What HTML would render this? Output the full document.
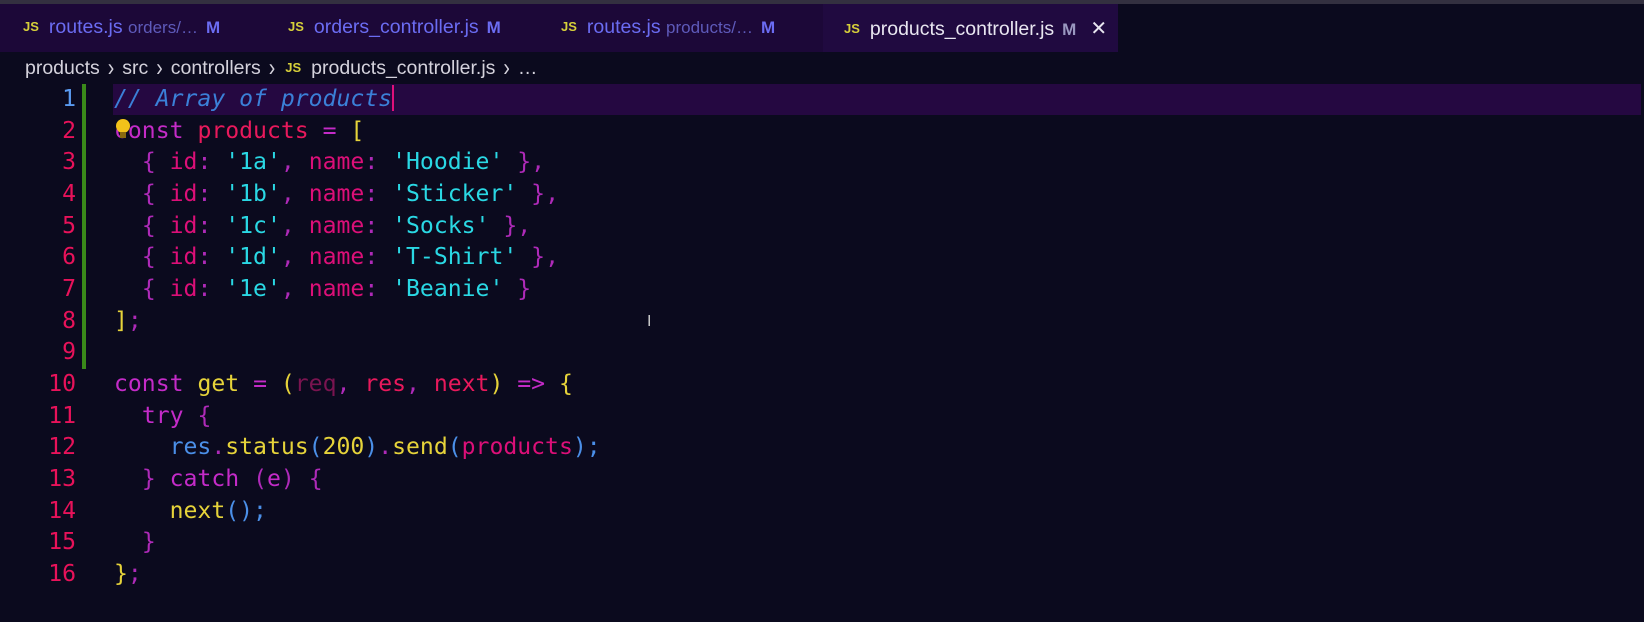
<!DOCTYPE html>
<html><head><meta charset="utf-8"><style>
*{margin:0;padding:0;box-sizing:border-box}
body{width:1644px;height:594px;background:#0b0a1e;overflow:hidden;position:relative;font-family:"Liberation Sans","DejaVu Sans",sans-serif}
.top{position:absolute;left:0;top:0;width:1644px;height:4px;background:#333040}
.tabs{position:absolute;left:0;top:4px;width:1118px;height:48px;background:#1c0838}
.active{position:absolute;left:823px;top:4px;width:295px;height:48px;background:#200a40}
.tab{position:absolute;top:16px;font-size:19.5px;color:#6b6cf2;white-space:nowrap}
.tab .js{color:#d6cf3a;font-weight:bold;font-size:13px;margin-right:10px;vertical-align:2px}
.tab .d{color:#5e5aba;font-size:17px}
.tab .m{font-weight:bold;font-size:17px;margin-left:8px}
.bc{position:absolute;top:57px;left:25px;font-size:19.5px;color:#d4d2dc;white-space:nowrap}
.bc .js{color:#d6cf3a;font-weight:bold;font-size:13px;vertical-align:2px;margin:0 10px 0 2px}
.ch{display:inline-block;margin:0 8px;transform:scaleY(1.3)}
.hl{position:absolute;left:113px;top:84px;width:1528px;height:31px;background:#250841}
.gut{position:absolute;left:82px;top:84px;width:4px;height:285px;background:#3a8a1a}
.code{position:absolute;left:0;top:84px;font-family:"DejaVu Sans Mono",monospace;font-size:23.1px;line-height:31.66px;white-space:pre}
.ln{position:absolute;left:0;width:76px;text-align:right;color:#e8125a}
.c{position:absolute;left:114px;color:#c42bc8}
.cm{color:#3b80d8;font-style:italic}.k{color:#c42bc8}.v{color:#e8195c}.y{color:#e6d33a}.p{color:#ae2ab8}.i{color:#dc0f78}.s{color:#2ad8e4}.b{color:#4b8fe8}.f{color:#e6d33a}.dim{color:#7a1450}
.cur{display:inline-block;width:2px;height:26px;background:#e0107a;vertical-align:-5px}
</style></head><body>
<div class="top"></div><div class="tabs"></div><div class="active"></div>
<div class="tab" style="left:23px"><span class="js">JS</span>routes.js <span class="d">orders/…</span><span class="m">M</span></div>
<div class="tab" style="left:288px"><span class="js">JS</span>orders_controller.js<span class="m">M</span></div>
<div class="tab" style="left:561px"><span class="js">JS</span>routes.js <span class="d">products/…</span><span class="m">M</span></div>
<div class="tab" style="left:844px;color:#e8e6f0"><span class="js">JS</span>products_controller.js<span class="m" style="color:#9a98c0">M</span><span style="margin-left:14px;font-size:20px">✕</span></div>
<div class="bc">products<span class="ch">›</span>src<span class="ch">›</span>controllers<span class="ch">›</span><span class="js">JS</span>products_controller.js<span class="ch">›</span>…</div>
<div class="hl"></div><div class="gut"></div>
<div class="code">
<div class="ln" style="top:0;color:#5a9af0">1</div><div class="c" style="top:0"><span class="cm">// Array of products</span><span class="cur"></span></div>
<div class="ln" style="top:31.66px">2</div><div class="c" style="top:31.66px"><span class="k">const</span> <span class="v">products</span> <span class="k">=</span> <span class="y">[</span></div>
<div class="ln" style="top:63.3px">3</div><div class="c" style="top:63.3px">  <span class="p">{</span> <span class="i">id</span><span class="p">:</span> <span class="s">'1a'</span><span class="p">,</span> <span class="i">name</span><span class="p">:</span> <span class="s">'Hoodie'</span> <span class="p">},</span></div>
<div class="ln" style="top:95px">4</div><div class="c" style="top:95px">  <span class="p">{</span> <span class="i">id</span><span class="p">:</span> <span class="s">'1b'</span><span class="p">,</span> <span class="i">name</span><span class="p">:</span> <span class="s">'Sticker'</span> <span class="p">},</span></div>
<div class="ln" style="top:126.6px">5</div><div class="c" style="top:126.6px">  <span class="p">{</span> <span class="i">id</span><span class="p">:</span> <span class="s">'1c'</span><span class="p">,</span> <span class="i">name</span><span class="p">:</span> <span class="s">'Socks'</span> <span class="p">},</span></div>
<div class="ln" style="top:158.3px">6</div><div class="c" style="top:158.3px">  <span class="p">{</span> <span class="i">id</span><span class="p">:</span> <span class="s">'1d'</span><span class="p">,</span> <span class="i">name</span><span class="p">:</span> <span class="s">'T-Shirt'</span> <span class="p">},</span></div>
<div class="ln" style="top:190px">7</div><div class="c" style="top:190px">  <span class="p">{</span> <span class="i">id</span><span class="p">:</span> <span class="s">'1e'</span><span class="p">,</span> <span class="i">name</span><span class="p">:</span> <span class="s">'Beanie'</span> <span class="p">}</span></div>
<div class="ln" style="top:221.6px">8</div><div class="c" style="top:221.6px"><span class="y">]</span><span class="p">;</span></div>
<div class="ln" style="top:253.3px">9</div>
<div class="ln" style="top:285px">10</div><div class="c" style="top:285px"><span class="k">const</span> <span class="f">get</span> <span class="k">=</span> <span class="y">(</span><span class="dim">req</span><span class="p">,</span> <span class="v">res</span><span class="p">,</span> <span class="v">next</span><span class="y">)</span> <span class="k">=&gt;</span> <span class="y">{</span></div>
<div class="ln" style="top:316.6px">11</div><div class="c" style="top:316.6px">  <span class="k">try</span> <span class="p">{</span></div>
<div class="ln" style="top:348.3px">12</div><div class="c" style="top:348.3px">    <span class="b">res</span><span class="p">.</span><span class="f">status</span><span class="b">(</span><span class="f">200</span><span class="b">)</span><span class="p">.</span><span class="f">send</span><span class="b">(</span><span class="i">products</span><span class="b">);</span></div>
<div class="ln" style="top:380px">13</div><div class="c" style="top:380px">  <span class="p">}</span> <span class="k">catch</span> <span class="p">(</span><span class="k">e</span><span class="p">)</span> <span class="p">{</span></div>
<div class="ln" style="top:411.6px">14</div><div class="c" style="top:411.6px">    <span class="f">next</span><span class="b">();</span></div>
<div class="ln" style="top:443.3px">15</div><div class="c" style="top:443.3px">  <span class="p">}</span></div>
<div class="ln" style="top:475px">16</div><div class="c" style="top:475px"><span class="y">}</span><span class="p">;</span></div>
</div>
<svg style="position:absolute;left:114px;top:118px" width="18" height="24"><circle cx="9" cy="8" r="7" fill="#f2c21a"/><rect x="6" y="14" width="6" height="6" fill="#8a6a10"/></svg>
<div style="position:absolute;left:647px;top:313px;color:#ccc;font-size:16px">I</div>
</body></html>
